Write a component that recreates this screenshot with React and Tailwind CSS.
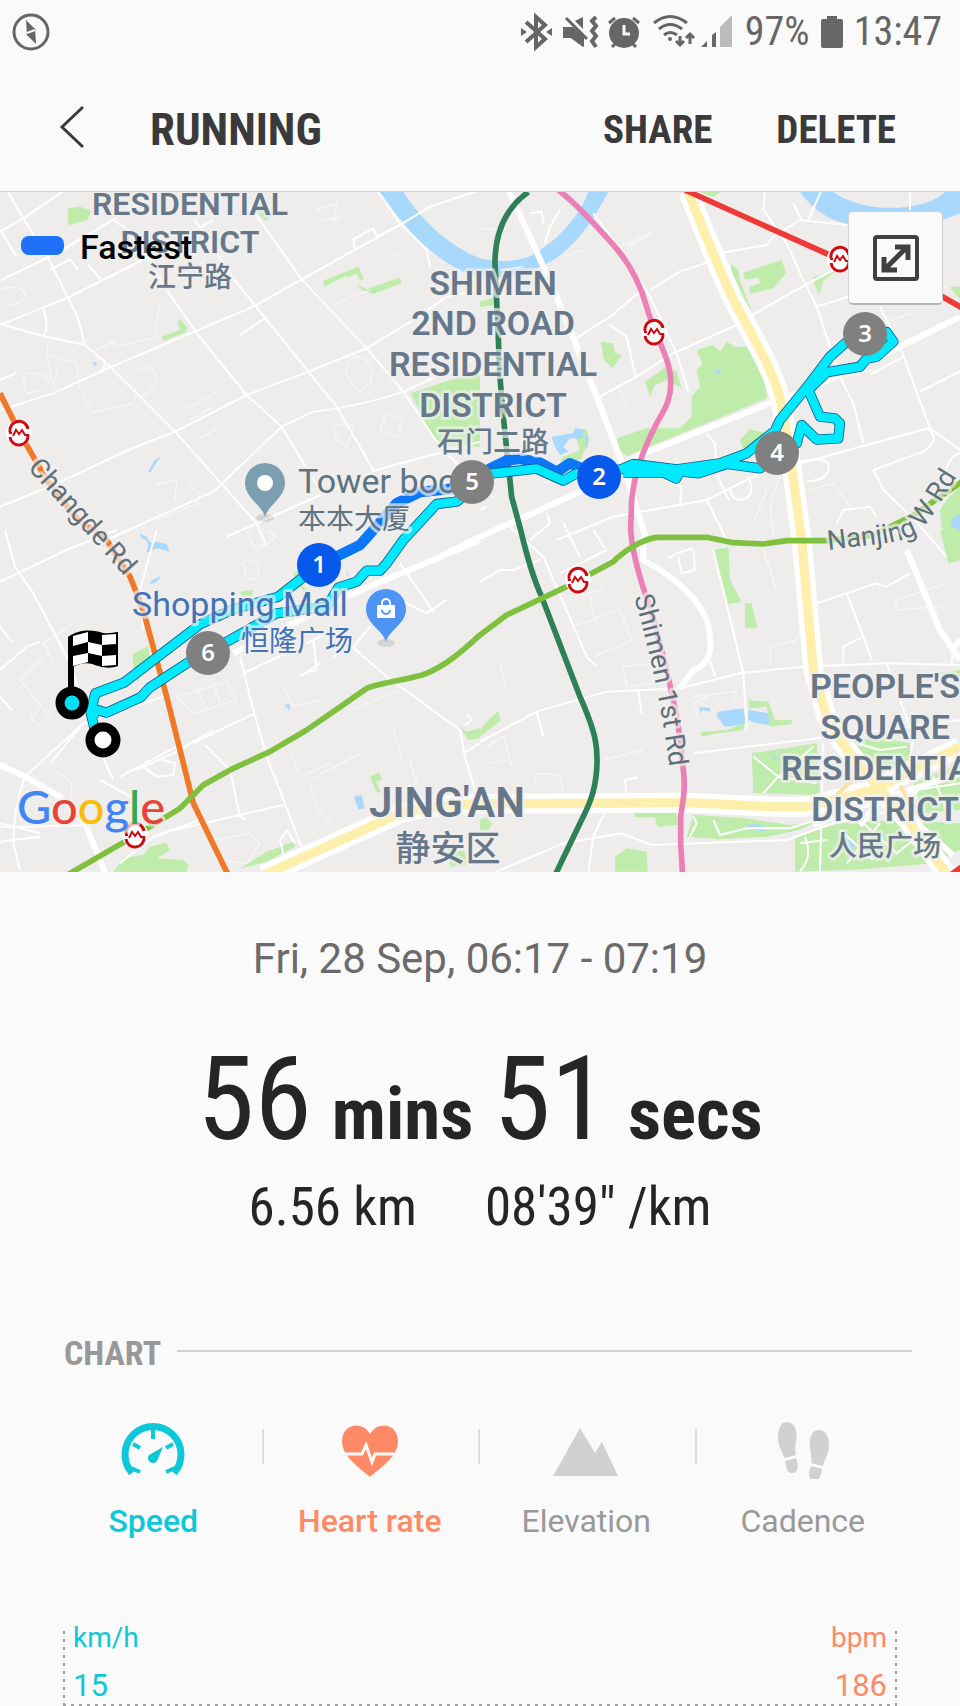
import React, { useState } from 'react';

// Map shapes, three units to a pixel, one set per quarter of the map
const mapTiles = [
  {
    id: 'nw',
    move: 'translate(0 -6)',
    parks: [
      '203,55 240,50 274,62 262,90 225,100 205,106',
      '970,272 1075,230 1092,268 1078,270 1070,250 975,292',
      '1072,284 1100,298 1200,262 1206,280 1120,312 1085,300',
      '487,440 542,418 530,400 540,387 563,415 555,428 490,453',
      '1232,610 1440,540 1440,770 1310,765',
      '745,50 800,45 820,75 795,92 775,70',
    ],
    water: ['275,515 290,518 288,530', '485,795 465,825 450,850 446,845 462,812', '418,1030 440,1040 445,1050 425,1045'],
    major: [],
    minor: [
      'M0 272L170 190L330 95L480 0',
      'M0 405L205 322L400 225L640 90',
      'M0 402L130 438L255 465L330 530L525 725L770 1000L800 1070',
      'M20 0L70 85L150 215L205 325Q245 400 252 462',
      'M0 125L70 85L195 0M130 355Q148 410 130 438M312 505Q316 535 305 545',
      'M0 570L50 548',
      'M0 660L160 610L330 532L500 460L760 350L905 268L1200 105L1290 50L1440 0',
      'M340 90L400 130L500 300L590 430L740 615L845 710L950 885',
      'M585 90L700 265L800 390L925 545L1010 650L1120 840',
      'M715 0L905 268L1100 475L1210 605L1320 770L1400 850',
      'M0 950L150 890L385 780L525 725L740 615L925 545L1100 475L1240 390L1340 320L1440 300',
      'M320 1050L640 905L845 710L940 665Q1080 650 1210 605L1440 500',
      'M720 435L795 385M680 1040L1130 840L1440 755',
      'M1130 0L1200 100L1280 180L1290 230',
      'M0 120L50 200M150 240L210 208L235 240M265 225L302 268',
      'M1200 105L1130 140L1120 115L1060 148L1065 180',
    ],
    faint: [
      'M145 460L140 495L230 520L240 600M175 530L160 590L140 495M75 550Q140 545 150 580M70 560L80 610L125 600',
      'M245 610L275 668L400 640L408 590M400 545Q460 515 470 560Q475 590 420 625',
      'M480 355L465 410L475 440L350 470L340 455L280 485',
      'M0 300Q60 280 75 310Q80 340 20 345',
      'M465 885L530 870L525 930M470 990L590 940L600 910Q560 890 570 860',
      'M550 660L655 605M570 690L640 650M600 745L650 715',
      'M1040 560Q1030 500 1080 500Q1130 520 1110 580L1080 605ZM1000 710Q1060 690 1060 720L1040 770L1010 750Z',
      'M1160 670L1210 690L1190 740L1140 720ZM980 290L1040 260M1000 345L1110 300M1170 190L1200 200',
      'M950 60L1010 40L1000 95M960 95L1020 80',
    ],
  },
  {
    id: 'ne',
    move: 'translate(1440 -6)',
    parks: [
      '755,222 775,240 780,270 813,360 798,358 752,235',
      '790,248 905,210 918,250 880,295 810,312 808,290 840,280 835,262 795,270',
      '1000,262 1070,240 1030,272 1018,315 1000,275',
      '362,455 400,460 405,490 425,495 398,535 372,510',
      '495,575 560,530 590,545 605,595 560,570 525,585 510,620',
      '650,480 700,465 720,485 740,455 765,470 800,470 830,500 857,560 860,625 680,700 440,798 420,780 410,745 500,715 600,715 635,680 635,620 660,590 650,540 668,520',
      '780,750 810,718 860,730 820,790 790,785',
      '1440,890 1400,930 1380,960 1385,1010 1410,1060 1410,1120 1440,1110',
      '0,335 50,320 45,345 0,350',
      '1410,290 1440,290 1440,330',
      '280,720 320,718 328,750 300,810 240,815 250,800 300,780',
      '660,6 720,6 700,22',
    ],
    water: [
      '703,545 715,538 726,548 708,552',
      '215,740 280,730 285,715 312,718 308,745 270,745 250,770 265,785 240,795 225,770',
      '1440,970 1415,990 1412,1010 1440,1020',
      '318,735 325,745 322,775 315,765',
    ],
    major: ['M85 0L150 140L230 320L350 620L430 830L500 1050', 'M-120 1100L0 1040L180 960L300 905L480 795L870 640L980 600L1240 480L1440 380'],
    minor: [
      'M350 625L470 560L580 490L770 405',
      'M280 450L390 380L480 305M390 405L440 440L468 565M0 960L20 950',
      'M510 300L600 245L690 215M690 195L860 165L880 140L960 90L1100 105',
      'M855 0L850 60L920 160L970 270L1010 350L1080 560L1120 640L1150 760',
      'M800 385L930 310L1060 240L1110 215M1010 350L1170 300',
      'M1200 350L1260 470L1350 715L1440 780M1170 555L1270 500',
      'M1320 605L1440 545M960 820L1345 715M1180 840L1210 900L1300 985',
      'M1345 715L1362 740Q1365 760 1330 785L1180 840M1070 1000L1090 960L1170 950L1190 980',
      'M340 70L400 150L510 320L590 490L625 605',
      'M680 730L705 760L710 850L740 920L750 930M555 870L605 890L600 950',
      'M230 1050L400 980L680 930L840 850M680 930L740 1050M200 970L210 1000L150 1050M300 1100L250 1000',
      'M750 890Q750 925 780 930Q815 925 815 890L805 860M940 820Q1060 790 1045 840Q1040 870 980 875',
      'M240 60L210 110L195 160M150 70L185 65L190 100M1290 0V60M1025 0L985 90M940 40L965 90',
      'M1400 1100L1300 985M1440 790Q1400 800 1390 870',
    ],
    faint: [
      'M400 180L530 120M250 200L310 180M60 120L0 115M180 880L260 860',
      'M60 240L130 230M990 900L1060 880L1110 950M900 860L870 940L880 1040M860 900L820 1000',
      'M1030 430L1080 470M1210 400L1290 370M420 600L440 640M520 130L440 170M1100 560L1180 540',
    ],
  },
  {
    id: 'sw',
    move: 'translate(0 1014)',
    parks: [
      '398,372 445,348 452,398 425,415 415,455 402,440',
      '722,1015 800,965 880,935 885,950 800,995',
      '340,1025 370,985 430,975 450,950 500,938 510,960 470,985 550,990 565,1005 560,1025',
      '1110,740 1138,725 1145,750 1128,755 1145,790 1128,785',
      '1380,590 1400,605 1440,595 1440,625 1405,630',
      '720,185 760,180 755,200 725,200',
      '880,130 900,120 910,170 925,180 910,185',
      '1340,950 1395,965 1400,1005 1350,1010',
    ],
    water: [
      '430,15 455,40 470,36 500,42 510,65 470,55 440,68 445,45',
      '485,138 470,155 448,165 455,150',
      '1062,800 1085,795 1094,835 1075,838',
      '850,525 870,522 868,545 860,530',
      '1040,122 1048,138 1040,135',
    ],
    major: ['M-20 695L75 740L180 800L255 880L320 1040', 'M700 370L860 290L1060 190L1300 90L1440 30'],
    minor: [
      'M0 155L200 60L350 0',
      'M15 0L45 110L100 190L210 400L240 490M0 500L35 540M0 290L35 335M0 420L80 350L120 335M75 740L250 580L150 700',
      'M720 380L760 540L800 680L905 950M250 580L490 500',
      'M580 640L690 585L765 550M410 720L520 670L640 600M615 645L690 720L720 860L740 870',
      'M500 905L850 825M730 430L900 350L1000 300M1200 100L1300 245M1000 300L1160 440L1380 600L1395 680L1440 830',
      'M1000 380L1060 350L1110 290M940 330L950 420L925 425M1200 210L1280 250L1340 210M120 910L0 880M0 890L90 890L270 885',
      'M75 740Q40 830 40 940L60 1020M290 640L340 750M430 710L470 740L520 735L525 700L490 690',
      'M360 740L530 650M360 1000L460 920L600 870M1400 550L1415 570L1395 585M300 750L410 810',
      'M860 1010L840 930L860 900L885 940M0 935L120 920M430 300L420 180L470 0M900 440L960 400M1390 670L1440 640',
    ],
    faint: [
      'M530 500L680 455L710 510L580 550ZM590 470L620 540M640 460L660 520M130 380L60 450L100 500L150 560',
      'M730 95Q760 80 775 110Q780 150 750 150Q730 130 730 95M740 0L760 50L800 40M800 0L830 20L770 60',
      'M930 750L1080 670M930 760L950 830L1000 890M1050 540L1200 480M870 660L900 740L990 700',
      'M640 930L750 910L780 940L740 1000L650 990M130 600L90 560L120 540M210 830L215 760L160 720M460 930L520 900',
      'M1230 690L1250 760L1160 790M850 470L880 530L960 510M1180 600L1210 700M220 280L130 340L160 400',
    ],
  },
  {
    id: 'se',
    move: 'translate(1440 1014)',
    parks: [
      '700,60 745,52 750,150 785,215 745,222',
      '795,220 815,220 833,295 795,295',
      '0,600 25,570 55,542 62,572 0,620',
      '815,670 1010,640 1020,795 820,790',
      '1100,640 1190,620 1290,640 1290,690 1180,740',
      '1300,760 1440,700 1440,840 1330,850',
      '460,848 590,848 592,885 532,890 525,862 465,862',
      '620,920 640,855 800,865 930,885 1010,875 960,900 860,920 720,928',
      '405,1025 405,980 440,955 500,965 503,1025',
      '945,920 1080,880 1250,870 1440,880 1440,960 1360,1000 1150,1018 945,1025',
      '805,500 815,512 865,515 885,570 935,570 935,582 870,590 860,530 808,535',
      '662,605 740,600 795,578 790,600 700,612 665,620',
      '1370,430 1440,420 1440,440',
      '1380,0 1440,0 1440,85 1405,100',
      '0,870 20,860 35,880 25,905 0,900',
    ],
    water: [
      '712,545 750,540 790,535 800,580 760,588 735,590 712,560',
      '805,540 865,550 868,585 830,580 805,570',
      '800,885 830,882 865,895 850,905 810,898',
      '1100,930 1125,935 1120,958 1105,955',
      '870,675 890,680 888,690',
      '658,532 690,534 690,545 668,540 662,552',
    ],
    major: ['M490 20L490 90C560 130 640 180 680 270C700 340 700 400 640 420L600 475', 'M1280 60L1380 300L1440 390M1440 330L1420 355'],
    minor: [
      'M600 475L380 485L170 545L0 635M600 475L780 430L970 410L1220 400L1440 405',
      'M700 60L790 430L800 600M640 670L1010 625L1440 570M1030 640L1020 1025',
      'M1010 220L1190 160L1220 170L1290 130M50 1025L250 940L425 910L515 945L920 930L1060 880L1300 830',
      'M375 845L340 920L325 1025M80 -20L190 80L320 380L350 410M240 130L380 60',
      'M1090 400L1090 350L1150 320L1100 190M1150 320L1175 390M170 545L190 620M475 485L485 550M690 390L705 440',
      'M440 800L435 750L475 742M565 85L590 70L640 55M595 80L605 130L645 120L640 60M0 155L60 120L100 120L180 90',
      'M1220 400L1300 620L1290 690M340 0L375 55M1415 405L1420 350',
      'M820 680L895 740L850 790M1000 650L895 740L1010 760M640 860L650 880L630 920M700 870L720 915L800 895L930 895L1010 870',
      'M975 920Q1000 980 960 1025M1080 900L1180 990M1150 880L1250 970L1340 900M1100 1000L1200 880M960 940L1040 930',
      'M1130 640L1200 660L1280 650M1310 780L1440 760M1360 740L1400 840',
    ],
    faint: [
      'M430 410L510 400L520 460L440 470ZM280 290L420 240L455 330L345 380M270 200L370 180M330 200L350 290',
      'M640 500L770 485L760 510M650 560L640 520L700 490M870 400L870 350L950 330L960 300M850 60L890 180M1245 240L1250 210L1400 160',
      'M1250 240L1380 230M20 650L70 620L100 720M30 700L80 690M160 770L170 730L240 735L250 790M370 690L490 660M80 480L60 400',
    ],
  },
];

const yellowRoads = [
  'M2065 0C2100 90 2140 190 2200 324C2270 454 2330 554 2345 644C2370 774 2390 940 2405 1044L2440 1434L2480 1574C2520 1664 2620 1764 2730 1894L2850 2060',
  'M790 2050L1200 1864Q1300 1838 1440 1836L2040 1832C2190 1834 2290 1849 2420 1844L2620 1794L2880 1664',
];

const metroLines = [
  { color: '#f07826', d: 'M0 604L60 724L140 864L230 980L320 1044L390 1154Q430 1250 450 1330L500 1514L580 1834L685 2050' },
  { color: '#2f7f59', d: 'M1585 0C1530 39 1485 104 1485 214L1500 554C1510 694 1525 814 1535 914L1562 1014C1580 1090 1600 1160 1625 1214L1740 1514C1788 1624 1795 1664 1790 1734C1785 1804 1765 1844 1740 1894L1665 2050' },
  { color: '#ea80b6', d: 'M1675 -6C1740 44 1790 104 1840 159C1890 214 1920 274 1940 344C1960 424 2010 494 2012 564C2015 614 2000 644 1970 694C1930 774 1905 834 1895 924L1892 1014C1898 1094 1930 1194 1950 1244C2000 1424 2040 1594 2045 1694C2060 1794 2050 1814 2042 1874L2042 1954L2048 2050' },
  { color: '#ee3936', d: 'M2055 -6L2500 194L2680 258L2820 310L2890 350M2850 2050L2890 2022' },
  { color: '#7fc13e', d: 'M200 2050L400 1934L500 1874L540 1849L610 1779L700 1729L810 1679L920 1614L1000 1559L1100 1489C1150 1469 1250 1459 1280 1444C1350 1414 1400 1364 1440 1329L1520 1269L1700 1184L1840 1109L1850 1099C1890 1064 1940 1039 1970 1036L2120 1036L2200 1052L2290 1056L2360 1046L2480 1046L2620 1030L2740 970L2890 866' },
];

const fastRoute = 'M958 1119L1080 1059L1120 1014L1190 934L1260 900L1415 884L1470 830L1520 806L1560 800L1620 812L1670 840L1710 814L1798 850';

const route = [
  'M285 1615L272 1562L286 1504L372 1472L600 1297L700 1252L835 1214L905 1159L958 1119',
  'M1415 894L1370 929L1310 936L1210 1044L1160 1114L1140 1136L1100 1136L1070 1169L1015 1187L980 1244L830 1264L690 1344L560 1414L450 1486L422 1516L320 1562L285 1552L280 1575',
  'M1415 854L1480 844L1610 830L1690 866L1730 844L1798 852L1870 829L1900 816L2030 832L2160 814L2240 784L2325 716L2340 684L2425 580L2490 494L2535 454L2595 420L2660 420L2680 449L2630 494L2600 500L2580 524L2480 541L2425 594L2460 674L2505 679L2520 694L2515 739L2450 743L2405 699L2390 754L2330 790L2280 829L2180 816L2095 844L2040 838L2028 860L1990 842L1870 842',
];

const stations = [
  [19, 241],
  [654, 140],
  [840, 67],
  [578, 388],
  [135, 643],
];

const kmMarks = [
  { n: 1, x: 319, y: 373, fast: true },
  { n: 2, x: 599, y: 285, fast: true },
  { n: 3, x: 865, y: 142 },
  { n: 4, x: 777, y: 261 },
  { n: 5, x: 472, y: 290 },
  { n: 6, x: 208, y: 461 },
];

const districts = [
  { x: 190, size: 'text-[32px]', lines: [['RESIDENTIAL', 23], ['DISTRICT', 61]], zh: ['江宁路', 95] },
  { x: 493, size: 'text-[34px]', lines: [['SHIMEN', 103], ['2ND ROAD', 143], ['RESIDENTIAL', 184], ['DISTRICT', 225]], zh: ['石门二路', 260] },
  { x: 885, size: 'text-[34px]', lines: [["PEOPLE'S", 506], ['SQUARE', 547], ['RESIDENTIAL', 588], ['DISTRICT', 629]], zh: ['人民广场', 664] },
];

const halo = '[paint-order:stroke] stroke-[#f0efee]/70 [stroke-width:6px] [stroke-linejoin:round]';

const RunMap = () => (
  <svg viewBox="0 0 960 680" className="block w-full h-auto bg-[#eeedec]" role="img" aria-label="Route map">
    <g transform="scale(0.33333)" fill="none" strokeLinejoin="round">
      <path
        fill="#a9d8fd"
        d="M1210 0C1260 74 1330 154 1440 199C1500 214 1580 209 1620 174C1700 124 1750 44 1765 0L1825 0C1780 84 1720 184 1620 224C1560 256 1480 264 1400 244C1270 184 1200 84 1140 0Z"
      />
      <path fill="#a9d8fd" d="M2400 0C2440 54 2490 94 2590 104L2770 99Q2840 84 2880 64V0H2835C2790 44 2690 54 2620 44Q2540 30 2500 0Z" />
      {mapTiles.map(tile => (
        <g key={tile.id} transform={tile.move}>
          {tile.parks.map(p => <polygon key={p} points={p} fill="#bfebab" />)}
          {tile.water.map(p => <polygon key={p} points={p} fill="#a9d8fd" />)}
          {tile.faint.map(d => <path key={d} d={d} stroke="#f7f7f6" strokeWidth="4" />)}
          {tile.minor.map(d => <path key={d} d={d} stroke="#fff" strokeWidth="6" />)}
          {tile.major.map(d => <path key={d} d={d} stroke="#fff" strokeWidth="18" />)}
        </g>
      ))}
      {yellowRoads.map(d => <path key={d} d={d} stroke="#fff" strokeWidth="60" />)}
      <path d="M2440 1900L2560 1850L2880 1745M2580 1900L2660 1800L2740 1700M2760 1780L2700 1850L2860 1990" stroke="#fff" strokeWidth="18" />
      <path d="M2500 1820L2560 1760M2700 1780L2740 1850" stroke="#fce29a" strokeWidth="12" />
      {yellowRoads.map(d => <path key={d} d={d} stroke="#fef0ac" strokeWidth="28" />)}
      {metroLines.map(line => <path key={line.color} d={line.d} stroke={line.color} strokeWidth="17" />)}

      <path d={fastRoute} stroke="#0a77f7" strokeWidth="32" />
      {route.map(d => <path key={d} d={d} stroke="#0a5f8a" strokeWidth="31" />)}
      {route.map(d => <path key={d} d={d} stroke="#00e9ff" strokeWidth="26" />)}
    </g>

    {stations.map(([x, y]) => (
      <g key={`${x}-${y}`} transform={`translate(${x} ${y})`} fill="none" stroke="#cf0a12">
        <circle r="13" fill="#fff" stroke="none" />
        <path d="M-9 -1A9 9 0 0 1 9 -4M9 2A9 9 0 0 1 -9 4" strokeWidth="3" />
        <path d="M-6 3L-3 -3L0 1L3 -3L6 2H10M-10 0H-7" strokeWidth="2" />
      </g>
    ))}

    {/* place pins */}
    <ellipse cx="265" cy="326" rx="9" ry="4" fill="#000" opacity="0.1" />
    <path d="M265 325C262 313 245 306 245 291A20 20 0 0 1 285 291C285 306 268 313 265 325Z" fill="#7b9fb0" />
    <circle cx="265" cy="291" r="8" fill="#fff" />
    <ellipse cx="386" cy="451" rx="9" ry="4" fill="#000" opacity="0.1" />
    <path d="M386 450C383 438 366 432 366 417A20 20 0 0 1 406 417C406 432 389 438 386 450Z" fill="#4e94f5" />
    <path d="M377 413H395V426H377Z" fill="#fff" />
    <path d="M382 414V411A4 4 0 0 1 390 411V414" fill="none" stroke="#fff" strokeWidth="2" />
    <path d="M382 418A4 4 0 0 0 390 418" fill="none" stroke="#4e94f5" strokeWidth="2" />

    <g className={`font-[Roboto,'Noto_Sans_CJK_SC',sans-serif] ${halo}`}>
      {districts.map(area => (
        <g key={area.x} textAnchor="middle" className="fill-[#67778a] font-semibold">
          {area.lines.map(([text, y]) => <text key={text} x={area.x} y={y} className={area.size}>{text}</text>)}
          <text x={area.x} y={area.zh[1]} className="text-[28px] font-medium">{area.zh[0]}</text>
        </g>
      ))}
      <g textAnchor="middle" className="fill-[#67778a]">
        <text x="447" y="625" className="text-[42px] font-semibold">JING'AN</text>
        <text x="448" y="669" className="text-[35px] font-medium">静安区</text>
      </g>
      <g className="fill-[#5d7480]">
        <text x="298" y="301" className="text-[34px]">Tower boo</text>
        <text x="298" y="337" className="text-[28px]">本本大厦</text>
      </g>
      <g className="fill-[#4272b8]">
        <text x="132" y="424" className="text-[34px]">Shopping Mall</text>
        <text x="241" y="459" className="text-[28px]">恒隆广场</text>
      </g>
      <g className="fill-[#5f7079] text-[27px]">
        <path id="changde" d="M27 276Q88 343 127 387" fill="none" stroke="none" />
        <path id="shimen" d="M634 405Q659 489 670 580" fill="none" stroke="none" />
        <path id="nanjing" d="M828 358C873 352 900 352 916 342C930 332 945 302 967 269" fill="none" stroke="none" />
        <text><textPath href="#changde">Changde Rd</textPath></text>
        <text><textPath href="#shimen">Shimen 1st Rd</textPath></text>
        <text><textPath href="#nanjing">Nanjing W Rd</textPath></text>
      </g>
    </g>

    <text x="17" y="632" className={`font-[Lato,sans-serif] text-[47px] font-medium ${halo}`}>
      <tspan fill="#4285f4">G</tspan>
      <tspan fill="#ea4335">o</tspan>
      <tspan fill="#fbbc05">o</tspan>
      <tspan fill="#4285f4">g</tspan>
      <tspan fill="#34a853">l</tspan>
      <tspan fill="#ea4335">e</tspan>
    </text>

    {kmMarks.map(mark => (
      <g key={mark.n}>
        <circle cx={mark.x} cy={mark.y} r="22" fill={mark.fast ? '#0659ea' : '#808080'} />
        <text x={mark.x} y={mark.y + 8} textAnchor="middle" className="fill-white font-['Noto_Sans',sans-serif] text-[24px] font-semibold">{mark.n}</text>
      </g>
    ))}

    {/* finish flag and start point */}
    <path d="M71 500V446" stroke="#000" strokeWidth="6" />
    <path d="M68 445C80 436 95 438 103 441C109 442 114 440 118 440V474C108 478 98 474 92 472C84 470 78 473 72 475L68 474Z" fill="#000" />
    <path d="M73 444L88 440V450L73 454ZM102 443L116 442V452L102 453ZM88 450L102 453V464L88 461ZM73 464L88 461V470L73 474ZM102 464L116 463V473L102 474Z" fill="#fff" />
    <circle cx="72" cy="511" r="12" fill="#00e0f5" stroke="#000" strokeWidth="9" />
    <circle cx="103" cy="548" r="13" fill="#fff" stroke="#000" strokeWidth="9" />
  </svg>
);

const StatusBar = () => (
  <div className="h-[63px] flex items-center justify-between pl-3 pr-[18px] text-[#666]">
    <svg width="38" height="38" viewBox="0 0 38 38" fill="none" stroke="currentColor">
      <circle cx="19" cy="19" r="17" strokeWidth="3" />
      <path d="M14 7L24 17L19 19L15 23ZM24 31L14 21L19 19L23 15Z" fill="currentColor" stroke="none" />
      <path d="M15 20L23 17" stroke="#fafafa" strokeWidth="2" />
    </svg>
    <div className="flex items-center">
      <svg width="212" height="40" viewBox="524 11 212 40" fill="none" stroke="currentColor">
        <path d="M529 21L548 38L539 46V16L548 24L529 41" strokeWidth="4" />
        <path d="M524 27L530 31L524 35ZM555 27L549 31L555 35Z" fill="currentColor" stroke="none" />
        <path d="M566 27H573L586 39V46L574 37H566ZM578 20L586 16V28Z" fill="currentColor" stroke="none" />
        <path d="M566 26H576L587 36V46L574 37H566Z" fill="currentColor" stroke="none" />
        <path d="M569 17L590 38" strokeWidth="3" />
        <path d="M599 16L595 20L599 25L595 30L599 35L595 40L599 46" strokeWidth="4" />
        <circle cx="627" cy="32" r="15" fill="currentColor" stroke="none" />
        <path d="M612 22L618 17M642 22L636 17M615 46L619 42M639 46L635 42" strokeWidth="3" />
        <path d="M627 24V33H633" stroke="#fafafa" strokeWidth="3" />
        <path d="M657 22Q673 9 690 22M662 28Q673 19 685 28M667 34Q673 29 680 34" strokeWidth="3" />
        <circle cx="673" cy="38" r="2" fill="currentColor" stroke="none" />
        <path d="M683 35V44M679 40L683 44L687 40M693 43V33M689 37L693 33L697 37" strokeWidth="3" />
        <path d="M704 46L710 40V46ZM715 34L719 31V46H715Z" fill="currentColor" stroke="none" />
        <path d="M723 26L735 14V46H723Z" fill="#bcbcbc" stroke="none" />
      </svg>
      <span className="ml-3 text-[40px] leading-none">97%</span>
      <svg className="ml-[11px]" width="22" height="32" viewBox="0 0 22 32" fill="currentColor">
        <path d="M6 0H16V3H20Q22 3 22 5V30Q22 32 20 32H2Q0 32 0 30V5Q0 3 2 3H6Z" />
      </svg>
      <span className="ml-[11px] text-[40px] leading-none">13:47</span>
    </div>
  </div>
);

const SpeedIcon = () => (
  <svg width="66" height="60" viewBox="0 0 66 60" fill="none" stroke="currentColor">
    <path d="M12 54A28 28 0 1 1 54 54" strokeWidth="7" />
    <path d="M33 10V20M13 25L20 29M53 25L46 29M11 49L20 53M55 49L46 53" strokeWidth="4" />
    <path d="M43 28L37 42A5 5 0 1 1 29 36Z" fill="currentColor" stroke="none" />
  </svg>
);

const HeartIcon = () => (
  <svg width="66" height="60" viewBox="0 0 66 60">
    <path d="M33 58C22 48 5 38 5 22C5 5 25 1 33 15C41 1 61 5 61 22C61 38 44 48 33 58Z" fill="currentColor" />
    <path d="M4 35H25L29 26L35 43L38 35H62" fill="none" stroke="#fafafa" strokeWidth="3" />
  </svg>
);

const ElevationIcon = () => (
  <svg width="66" height="60" viewBox="0 0 66 60" fill="currentColor">
    <path d="M0 57L27 9L42 34L49 23L65 57Z" />
  </svg>
);

const CadenceIcon = () => (
  <svg width="66" height="60" viewBox="0 0 66 60" fill="currentColor">
    <path d="M17 3C25 3 28 13 26 22C25 29 25 32 26 36L14 39C13 33 8 28 8 18C8 9 11 3 17 3ZM15 42L26 39C29 47 28 54 23 54C17 55 16 48 15 42Z" />
    <path d="M49 11C55 11 59 17 59 26C59 36 54 40 53 47L41 44C42 39 41 37 40 29C39 19 42 11 49 11ZM41 47L52 50C51 57 49 62 44 62C38 61 38 54 41 47Z" />
  </svg>
);

const tabs = [
  { name: 'Speed', Icon: SpeedIcon, on: 'text-[#0cc8da]' },
  { name: 'Heart rate', Icon: HeartIcon, on: 'text-[#ff8a65]' },
  { name: 'Elevation', Icon: ElevationIcon, on: 'text-[#8bc34a]' },
  { name: 'Cadence', Icon: CadenceIcon, on: 'text-[#7e8ce0]' },
];

const dotsDown = 'bg-[repeating-linear-gradient(180deg,#a0a0a0_0_3px,transparent_3px_8px)]';
const dotsAcross = 'bg-[repeating-linear-gradient(90deg,#a0a0a0_0_3px,transparent_3px_8px)]';

const App = () => {
  const [active, setActive] = useState(['Speed', 'Heart rate']);

  const toggle = (name) => {
    setActive(active.includes(name) ? active.filter(n => n !== name) : [...active, name]);
  };

  return (
    <div className="bg-[#fafafa] text-[#252525] font-['Roboto_Condensed',Roboto,sans-serif] overflow-hidden">
      <StatusBar />

      <header className="h-[128px] flex items-center pl-[56px] pr-[64px] text-[#3a3a3a]">
        <button aria-label="Back" className="w-[34px] h-[44px]">
          <svg width="34" height="44" viewBox="0 0 34 44" fill="none" stroke="currentColor" strokeWidth="3">
            <path d="M27 2L6 22L27 42" />
          </svg>
        </button>
        <h1 className="ml-[60px] pt-[6px] text-[45px] font-bold">RUNNING</h1>
        <button className="ml-auto pt-[6px] text-[39px] font-bold">SHARE</button>
        <button className="ml-16 pt-[6px] text-[39px] font-bold">DELETE</button>
      </header>

      {/* Map */}
      <div className="relative border-t border-[#d4d4d4]">
        <RunMap />
        <div className="absolute left-[21px] top-[29px] flex items-center gap-4">
          <span className="w-[43px] h-[19px] rounded-[8px] bg-[#1f71fa]" />
          <span className="pt-1 font-[Roboto,sans-serif] text-[34px] leading-[44px] font-medium text-black">Fastest</span>
        </div>
        <button
          aria-label="Expand map"
          className="absolute right-[17px] top-[19px] w-[95px] h-[94px] flex items-center justify-center rounded-[5px] bg-[#fafafa] border border-[#d0d0d0] border-b-2 border-b-[#b5b5b5] text-[#404040]"
        >
          <svg width="46" height="46" viewBox="0 0 46 46" fill="none" stroke="currentColor" strokeWidth="5">
            <rect x="2" y="2" width="42" height="42" rx="2" strokeWidth="4" />
            <path d="M13 33L33 13M22 12H35V25M11 22V35H24" />
          </svg>
        </button>
      </div>

      {/* Summary */}
      <section className="pt-[57px] flex flex-col items-center">
        <p className="font-[Roboto,sans-serif] text-[42px] leading-[60px] text-[#6b6b6b]">Fri, 28 Sep, 06:17 - 07:19</p>
        <p className="mt-[43px] h-[134px] flex gap-5 items-baseline font-bold text-[73px] leading-[134px]">
          <span className="text-[116px] font-normal">56</span>
          <span>mins</span>
          <span className="text-[116px] font-normal">51</span>
          <span>secs</span>
        </p>
        <p className="mt-[5px] flex gap-[68px] text-[53px] leading-[72px]">
          <span>6.56 km</span>
          <span>08'39" /km</span>
        </p>
      </section>

      {/* Chart */}
      <section className="mt-[78px]">
        <div className="flex items-center gap-4 pl-[64px] pr-[48px]">
          <h2 className="pt-1 text-[34px] leading-[56px] font-bold text-[#999]">CHART</h2>
          <hr className="flex-1 border-t-2 border-[#d3d3d3]" />
        </div>

        <div className="mt-[38px] ml-[45px] mr-[49px] grid grid-cols-4 font-[Roboto,sans-serif]">
          {tabs.map(({ name, Icon, on }, i) => {
            const selected = active.includes(name);
            return (
              <button
                key={name}
                aria-pressed={selected}
                onClick={() => toggle(name)}
                className="relative flex flex-col items-center text-[32px] leading-[48px]"
              >
                {i > 0 && <span className="absolute left-0 top-[10px] w-[2px] h-[35px] bg-[#dcdcdc]" />}
                <span className={selected ? on : 'text-[#d1d1d1]'}><Icon /></span>
                <span className={selected ? `${on} mt-[18px] font-medium` : 'mt-[18px] text-[#999]'}>{name}</span>
              </button>
            );
          })}
        </div>

        <div className="mt-[79px] mx-[63px] h-20 flex font-[Roboto,sans-serif] text-[28px]">
          <div className={`mt-[7px] w-[2px] ${dotsDown}`} />
          <div className="flex-1 px-2 flex flex-col text-[#0cc8da]">
            <span className="leading-[28px]">km/h</span>
            <span className="mt-[18px] text-[31px] leading-[32px]">15</span>
          </div>
          <div className="px-2 flex flex-col items-end text-[#ff8a65]">
            <span className="leading-[28px]">bpm</span>
            <span className="mt-[18px] text-[31px] leading-[32px]">186</span>
          </div>
          <div className={`mt-[7px] w-[2px] ${dotsDown}`} />
        </div>
        <div className={`mx-[63px] h-[2px] ${dotsAcross}`} />
      </section>
    </div>
  );
};

export default App;
